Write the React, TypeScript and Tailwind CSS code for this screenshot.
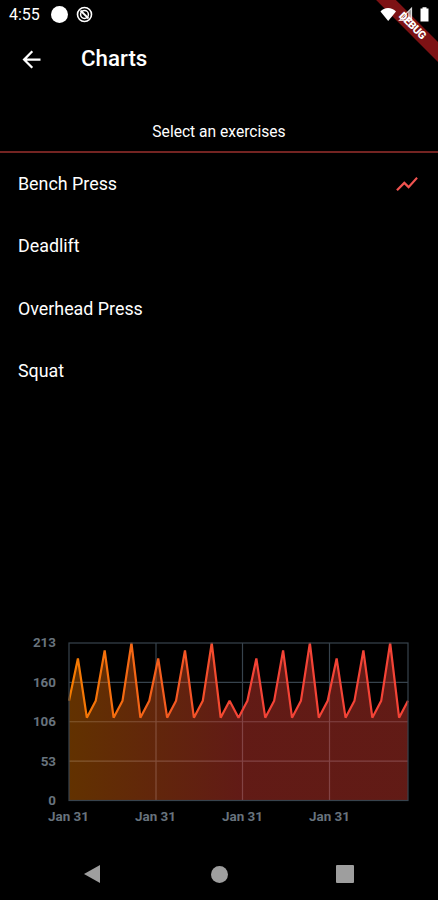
import { MdArrowBack, MdShowChart } from 'react-icons/md'

const exercises = ['Bench Press', 'Deadlift', 'Overhead Press', 'Squat']

const values = [
  135, 192, 112, 135, 203, 112, 135, 213, 112, 135, 192, 112, 135, 203, 112, 135, 213, 112, 135, 112,
  135, 192, 112, 135, 203, 112, 135, 213, 112, 135, 192, 112, 135, 203, 112, 135, 213, 112, 135,
]

const MAX = 213
const CHART_WIDTH = 339
const CHART_HEIGHT = 157.5

const yLabels = ['213', '160', '106', '53', '0']
const xLabels = ['Jan 31', 'Jan 31', 'Jan 31', 'Jan 31']

function StatusBar() {
  return (
    <div className="relative z-10 flex h-7 items-center pl-[9px] pr-[7px]">
      <span className="w-[42px] pt-0.5 text-[16px] leading-7">4:55</span>
      <div className="h-[17px] w-[17px] rounded-full bg-white" />
      <svg width="17" height="17" viewBox="0 0 17 17" fill="none" stroke="white" className="ml-2">
        <circle cx="8.5" cy="8.5" r="7" strokeWidth="1.6" />
        <circle cx="8.5" cy="8.5" r="3.9" strokeWidth="1.5" />
        <path d="M4.5 4.5L12.5 12.5" strokeWidth="1.8" />
      </svg>
      <svg width="52" height="18" viewBox="0 0 52 18" fill="white" className="ml-auto">
        <path d="M1.5 6.5C5 1.8 13 1.8 17 6.5L9.2 16Z" />
        <path d="M32.5 3.2V15.5H20.5Z" fill="none" stroke="white" strokeWidth="1.2" strokeOpacity="0.8" />
        <path d="M32.5 3V16H29V7Z" fillOpacity="0.6" />
        <path d="M43.5 2.2H47.5V3.5H49.5V16.5H41.5V3.5H43.5Z" />
      </svg>
    </div>
  )
}

function DebugBanner() {
  return (
    <div className="pointer-events-none absolute right-0 top-0 h-20 w-20 overflow-hidden">
      <div className="absolute left-[-6px] top-[19px] flex h-[14px] w-[120px] rotate-45 items-center justify-center bg-[#7d1214] text-[11px] font-black tracking-[-0.4px]">
        DEBUG
      </div>
    </div>
  )
}

function Chart() {
  const line = values
    .map((v, i) => `${(i * CHART_WIDTH) / (values.length - 1)},${CHART_HEIGHT * (1 - v / MAX)}`)
    .join(' ')

  return (
    <div className="h-[190px] pl-[13px] text-[13.4px] font-bold text-[#68737d]">
      <div className="flex">
        <div className="-mt-2 mr-[13px] flex h-[174px] w-[43px] flex-col justify-between text-right">
          {yLabels.map((label) => (
            <span key={label} className="leading-4">{label}</span>
          ))}
        </div>
        <svg width={CHART_WIDTH} height={CHART_HEIGHT} className="overflow-visible" fill="none">
          <defs>
            <linearGradient id="stroke" gradientUnits="userSpaceOnUse" x1="0" y1="0" x2={CHART_WIDTH} y2="0">
              <stop offset="0" stopColor="#f57c00" />
              <stop offset="0.5" stopColor="#f44336" />
            </linearGradient>
          </defs>
          <g stroke="#37434d">
            {yLabels.slice(1, -1).map((label, i) => (
              <path key={label} d={`M0 ${((i + 1) * CHART_HEIGHT) / 4}H${CHART_WIDTH}`} strokeWidth="1.2" />
            ))}
            {[87, 173.5, 260.5].map((x) => (
              <path key={x} d={`M${x} 0V${CHART_HEIGHT}`} strokeWidth="1.2" />
            ))}
          </g>
          <polygon
            points={`0,${CHART_HEIGHT} ${line} ${CHART_WIDTH},${CHART_HEIGHT}`}
            fill="url(#stroke)"
            fillOpacity="0.4"
          />
          <polyline points={line} stroke="url(#stroke)" strokeWidth="2.2" strokeLinejoin="bevel" />
          <rect width={CHART_WIDTH} height={CHART_HEIGHT} stroke="#37434d" strokeWidth="1.2" />
        </svg>
      </div>
      <div className="ml-[12px] flex">
        {xLabels.map((label, i) => (
          <span key={i} className="w-[87px] text-center leading-4">{label}</span>
        ))}
      </div>
    </div>
  )
}

function NavigationBar() {
  return (
    <div className="mt-auto flex h-[52px] items-center justify-between pl-[83px] pr-[84px]">
      <svg width="18" height="20" viewBox="0 0 18 20" fill="#9e9e9e">
        <path d="M1 10L17 1V19Z" />
      </svg>
      <div className="ml-px h-[17px] w-[17px] rounded-full bg-[#9e9e9e]" />
      <div className="h-[18px] w-[18px] rounded-[1px] bg-[#9e9e9e]" />
    </div>
  )
}

export default function App() {
  return (
    <div className="relative flex h-[900px] w-[438px] flex-col overflow-hidden bg-black font-[Roboto,sans-serif] text-white">
      <StatusBar />
      <header className="flex h-[62px] items-center pl-[18px]">
        <MdArrowBack size={27} />
        <h1 className="ml-9 text-[22.3px] font-medium">Charts</h1>
      </header>
      <div className="flex h-[63px] items-end justify-center border-b-2 border-[#742422] pb-[9px] text-[15.6px] leading-5">
        Select an exercises
      </div>
      <ul className="h-[490px]">
        {exercises.map((name, i) => (
          <li key={name} className="flex h-[62.4px] items-center justify-between px-[18px] text-[17.85px]">
            {name}
            {i === 0 && <MdShowChart size={26} className="text-[#ef5350]" />}
          </li>
        ))}
      </ul>
      <Chart />
      <NavigationBar />
      <DebugBanner />
    </div>
  )
}
